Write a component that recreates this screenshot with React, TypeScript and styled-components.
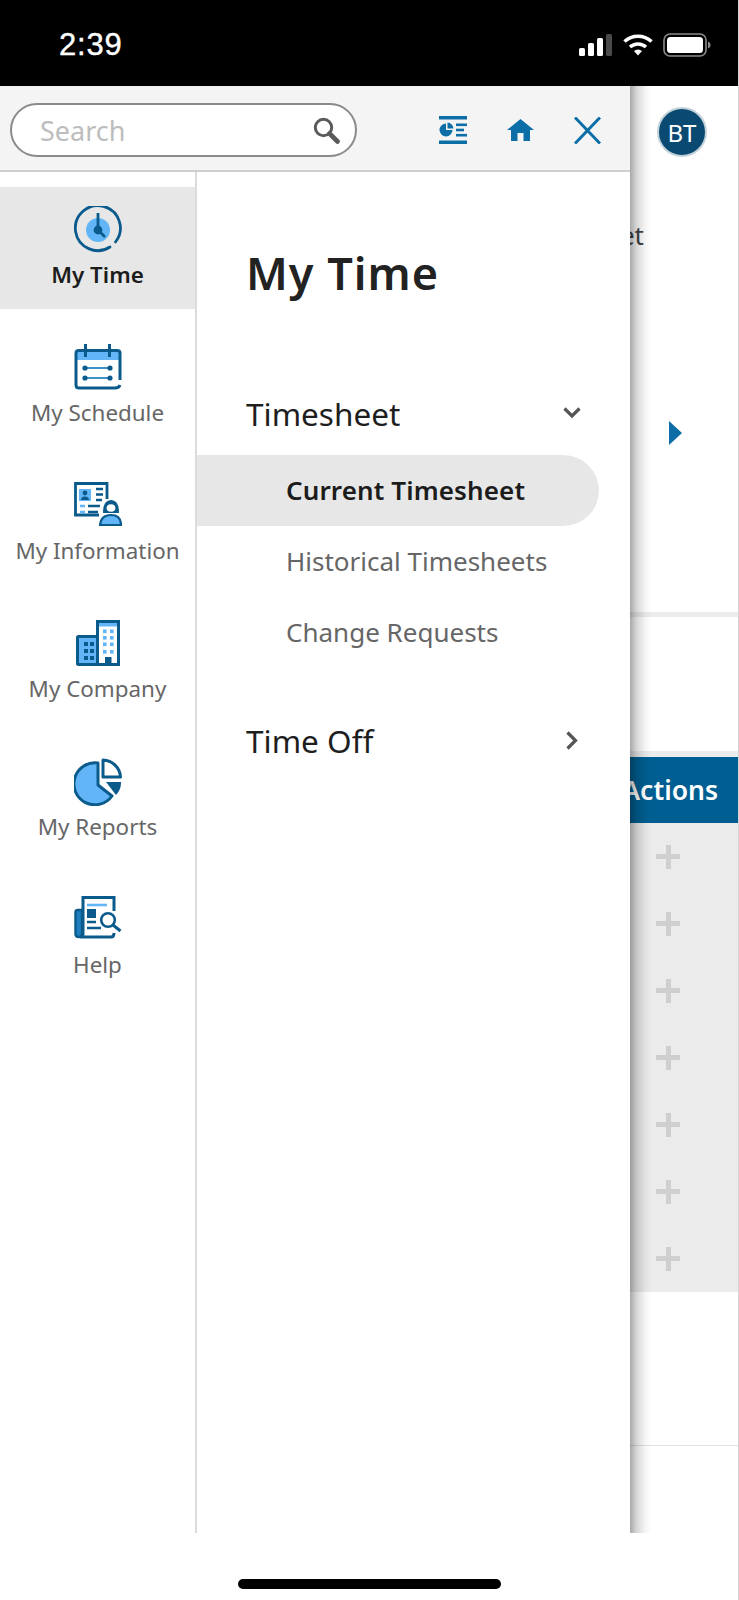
import React from "react";
import styled, { createGlobalStyle } from "styled-components";

const DARK = "#0a5a8c";
const LIGHT = "#62b6f7";
const BRAND = "#0b6ea6";
const FONT = `"Noto Sans", "Open Sans", sans-serif`;

const Global = createGlobalStyle`
  html, body { margin: 0; padding: 0; background: #fff; }
  * { box-sizing: border-box; }
`;

const Screen = styled.div`
  position: relative;
  width: 739px;
  height: 1600px;
  overflow: hidden;
  background: #fff;
  border-right: 1px solid #d4d4d4;
  font-family: ${FONT};
  display: flex;
  flex-direction: column;
`;

const StatusBar = styled.div`
  height: 86px;
  flex: none;
  background: #000;
  color: #fff;
  display: flex;
  align-items: center;
  justify-content: space-between;
  padding: 3px 27px 0 59px;
`;

const Clock = styled.span`
  font-family: "Liberation Sans", Arial, sans-serif;
  font-size: 31px;
  line-height: 30px;
  font-weight: 500;
  -webkit-text-stroke: 0.4px #fff;
  letter-spacing: 0.8px;
`;

const StatusIcons = styled.div`
  display: flex;
  align-items: center;
  gap: 10px;
`;

const Page = styled.div`
  flex: none;
  height: 1447px;
  display: flex;
  flex-direction: column;
  background: #fff;
`;

const PageTop = styled.div`
  height: 526px;
  flex: none;
  display: flex;
  flex-direction: column;
  align-items: flex-end;
  padding: 21px 31px 0 0;
`;

const Avatar = styled.div`
  width: 50px;
  height: 50px;
  border-radius: 50%;
  background: #0a4a72;
  border: 2px solid #c4d2da;
  color: #fff;
  display: flex;
  align-items: center;
  justify-content: center;
  font-size: 24px;
`;

const PageText = styled.div`
  font-size: 26px;
  line-height: 36px;
  color: #444;
  margin: 60px 63px 0 0;
  white-space: nowrap;
`;

const NextArrow = styled.div`
  width: 0;
  height: 0;
  margin: 168px 25px 0 0;
  border-top: 12.5px solid transparent;
  border-bottom: 12.5px solid transparent;
  border-left: 13px solid ${BRAND};
`;

const Band = styled.div<{ $h: number }>`
  height: ${(p) => p.$h}px;
  flex: none;
  background: #ececec;
`;

const Gap = styled.div<{ $h: number }>`
  height: ${(p) => p.$h}px;
  flex: none;
`;

const TableHead = styled.div`
  height: 66px;
  flex: none;
  background: #005f92;
  color: #fff;
  font-size: 26.5px;
  font-weight: 600;
  display: flex;
  align-items: center;
  justify-content: flex-end;
  padding-right: 20px;
`;

const TableBody = styled.div`
  display: flex;
  flex-direction: column;
  background: #ebebeb;
  flex: none;
`;

const TableRow = styled.div`
  height: 67px;
  display: flex;
  align-items: center;
  justify-content: flex-end;
  padding-right: 58px;
`;

const Plus = styled.div`
  position: relative;
  width: 24px;
  height: 24px;
  &::before, &::after {
    content: "";
    position: absolute;
    background: #cfcfcf;
  }
  &::before { left: 0; right: 0; top: 9.5px; height: 5px; }
  &::after { top: 0; bottom: 0; left: 9.5px; width: 5px; }
`;

const FootLine = styled.div`
  height: 1px;
  flex: none;
  background: #e2e2e2;
  margin-top: 153px;
`;

const HomeArea = styled.div`
  flex: 1;
  display: flex;
  justify-content: center;
  padding-top: 46px;
`;

const HomeIndicator = styled.div`
  width: 263px;
  height: 10px;
  border-radius: 5px;
  background: #000;
`;

const Drawer = styled.aside`
  position: absolute;
  left: 0;
  top: 86px;
  width: 630px;
  height: 1447px;
  background: #fff;
  display: flex;
  flex-direction: column;
  &::after {
    content: "";
    position: absolute;
    left: 100%;
    top: 0;
    bottom: 0;
    width: 22px;
    background: linear-gradient(
      to right,
      rgba(0, 0, 0, 0.34),
      rgba(0, 0, 0, 0.16) 30%,
      rgba(0, 0, 0, 0.04) 70%,
      rgba(0, 0, 0, 0)
    );
  }
`;

const DrawerHeader = styled.header`
  height: 86px;
  flex: none;
  background: #f4f4f4;
  border-bottom: 2px solid #cfcfcf;
  display: flex;
  align-items: center;
  padding: 4px 29px 0 10px;
`;

const SearchBox = styled.div`
  width: 347px;
  height: 54px;
  border-radius: 27px;
  border: 2px solid #8a8a8a;
  background: #fff;
  display: flex;
  align-items: center;
  justify-content: space-between;
  padding: 0 15px 0 28px;
`;

const SearchText = styled.span`
  font-size: 27px;
  color: #bdbdbd;
`;

const HeaderIcons = styled.div`
  margin-left: auto;
  display: flex;
  align-items: center;
  gap: 40px;
`;

const DrawerBody = styled.div`
  flex: 1;
  display: flex;
  min-height: 0;
`;

const Rail = styled.nav`
  width: 197px;
  flex: none;
  border-right: 2px solid #dcdcdc;
  padding-top: 15px;
  display: flex;
  flex-direction: column;
  gap: 16px;
`;

const RailItem = styled.div<{ $active?: boolean }>`
  height: 122px;
  flex: none;
  padding-top: 19px;
  display: flex;
  flex-direction: column;
  align-items: center;
  background: ${(p) => (p.$active ? "#e7e7e7" : "transparent")};
`;

const RailIcon = styled.div`
  height: 48px;
  display: flex;
  align-items: flex-start;
  justify-content: center;
  svg { display: block; }
`;

const RailLabel = styled.div<{ $active?: boolean }>`
  margin-top: 6px;
  font-size: 22.4px;
  line-height: 30px;
  white-space: nowrap;
  color: ${(p) => (p.$active ? "#1c1c1c" : "#666")};
  font-weight: ${(p) => (p.$active ? 600 : 400)};
`;

const SubNav = styled.div`
  flex: 1;
  display: flex;
  flex-direction: column;
  padding-top: 66px;
`;

const Title = styled.h1`
  margin: 0 0 0 49px;
  font-family: "Noto Sans", sans-serif;
  font-size: 45px;
  line-height: 70px;
  font-weight: 600;
  color: #222;
  letter-spacing: 1px;
`;

const GroupRow = styled.div<{ $top: number }>`
  margin-top: ${(p) => p.$top}px;
  height: 50px;
  display: flex;
  align-items: center;
  justify-content: space-between;
  padding: 0 47px 0 49px;
  font-size: 31.5px;
  color: #1e1e1e;
`;

const ChevronSlot = styled.span`
  width: 22px;
  display: flex;
  justify-content: center;
`;

const SubList = styled.div`
  margin-top: 17px;
  display: flex;
  flex-direction: column;
`;

const SubItem = styled.div<{ $active?: boolean }>`
  width: 402px;
  height: 71px;
  display: flex;
  align-items: center;
  padding: 0 0 2px 89px;
  font-size: 26px;
  white-space: nowrap;
  letter-spacing: ${(p) => (p.$active ? "0.12px" : "0")};
  color: ${(p) => (p.$active ? "#1c1c1c" : "#666")};
  font-weight: ${(p) => (p.$active ? 600 : 400)};
  background: ${(p) => (p.$active ? "#e7e7e7" : "transparent")};
  border-radius: 0 36px 36px 0;
`;

const SignalIcon = () => (
  <svg width="34" height="22" viewBox="0 0 34 22">
    <rect x="0" y="14" width="6" height="8" rx="1.5" fill="#fff" />
    <rect x="9" y="9" width="6" height="13" rx="1.5" fill="#fff" />
    <rect x="18" y="4" width="6" height="18" rx="1.5" fill="#fff" />
    <rect x="27" y="0" width="6" height="22" rx="1.5" fill="#4a4a4a" />
  </svg>
);

const WifiIcon = () => (
  <svg width="30" height="22" viewBox="0 0 30 22">
    <path d="M1.5 7.5 A20 20 0 0 1 28.5 7.5" fill="none" stroke="#fff" strokeWidth="3.6" />
    <path d="M7 13 A12 12 0 0 1 23 13" fill="none" stroke="#fff" strokeWidth="3.6" />
    <path d="M11 17 L15 21.5 L19 17 A6 6 0 0 0 11 17 Z" fill="#fff" />
  </svg>
);

const BatteryIcon = () => (
  <svg width="48" height="24" viewBox="0 0 48 24">
    <rect x="1" y="1" width="42" height="22" rx="6" fill="none" stroke="#8a8a8a" strokeWidth="1.6" />
    <rect x="4" y="4" width="36" height="16" rx="3.5" fill="#fff" />
    <path d="M45 8.5 C47 9.5 47.5 10.5 47.5 12 C47.5 13.5 47 14.5 45 15.5 Z" fill="#8a8a8a" />
  </svg>
);

const MagnifierIcon = () => (
  <svg width="27" height="27" viewBox="0 0 27 27">
    <circle cx="10.5" cy="10.5" r="8.2" fill="none" stroke="#5a5a5a" strokeWidth="3" />
    <path d="M16.5 16.5 L24.5 24.5" stroke="#5a5a5a" strokeWidth="4.6" strokeLinecap="round" />
  </svg>
);

const ReportBarIcon = () => (
  <svg width="28" height="28" viewBox="0 0 28 28" fill={BRAND}>
    <rect x="0" y="0" width="28" height="3.5" />
    <rect x="0" y="24.5" width="28" height="3.5" />
    <path d="M7 7.5 A6.5 6.5 0 1 0 13.5 14 L7 14 Z" />
    <path d="M8.5 6.5 A6.5 6.5 0 0 1 14.5 12.5 L8.5 12.5 Z" />
    <rect x="17" y="7.5" width="11" height="2.6" />
    <rect x="17" y="12.7" width="8" height="2.6" />
    <rect x="17" y="17.9" width="11" height="2.6" />
  </svg>
);

const HomeIcon = () => (
  <svg width="27" height="22" viewBox="0 0 27 22" fill={BRAND}>
    <path d="M13.5 0 L27 11 L23 11 L23 22 L16.5 22 L16.5 14 L10.5 14 L10.5 22 L4 22 L4 11 L0 11 Z" />
  </svg>
);

const CloseIcon = () => (
  <svg width="27" height="27" viewBox="0 0 27 27" fill="none" stroke={BRAND} strokeWidth="3">
    <path d="M1 0.5 L26 26.5 M26 0.5 L1 26.5" />
  </svg>
);

const ChevronDown = () => (
  <svg width="18" height="12" viewBox="0 0 18 12" fill="none" stroke="#555" strokeWidth="3.2">
    <path d="M1.5 1.5 L9 9 L16.5 1.5" />
  </svg>
);

const ChevronRight = () => (
  <svg width="12" height="19" viewBox="0 0 12 19" fill="none" stroke="#555" strokeWidth="3.2">
    <path d="M1.5 1.5 L9.5 9.5 L1.5 17.5" />
  </svg>
);

const ClockRailIcon = () => (
  <svg width="48" height="48" viewBox="0 0 48 48" fill="none">
    <path d="M36 41 A 22.5 22.5 0 1 1 41.5 36" stroke={DARK} strokeWidth="2.8" strokeLinecap="round" />
    <circle cx="24" cy="24" r="12" fill={LIGHT} />
    <path d="M24 7 L24 24 L31 31" stroke={DARK} strokeWidth="2.8" />
    <circle cx="24" cy="24" r="4.4" fill={DARK} />
  </svg>
);

const ScheduleIcon = () => (
  <svg width="48" height="46" viewBox="0 0 48 46" fill="none">
    <path d="M2 16 L2 8 Q2 6 4 6 L44 6 Q46 6 46 8 L46 16 Z" fill={LIGHT} />
    <path d="M46 36 L46 9 Q46 6.5 43 6.5 L5 6.5 Q2 6.5 2 9 L2 41 Q2 44 5 44 L41 44 Q45 44 46 41" stroke={DARK} strokeWidth="3" />
    <path d="M11.5 0 L11.5 13 M35.5 0 L35.5 13" stroke={DARK} strokeWidth="3" />
    <path d="M11 24 L36 24 M11 34 L36 34" stroke="#3f8fc8" strokeWidth="1.8" />
    <circle cx="11" cy="24" r="2.6" fill={DARK} />
    <circle cx="36" cy="24" r="2.6" fill={DARK} />
    <circle cx="11" cy="34" r="2.6" fill={DARK} />
    <circle cx="36" cy="34" r="2.6" fill={DARK} />
  </svg>
);

const InformationIcon = () => (
  <svg width="48" height="44" viewBox="0 0 48 44" fill="none">
    <path d="M25 33 L1.5 33 L1.5 1.5 L33 1.5 L33 17" stroke={DARK} strokeWidth="2.8" />
    <rect x="5" y="7" width="12" height="12" fill={LIGHT} />
    <circle cx="11" cy="11" r="2.4" fill={DARK} />
    <path d="M7 18 Q7 14.5 11 14.5 Q15 14.5 15 18 Z" fill={DARK} />
    <path d="M22 7 L29 7 M22 12.5 L29 12.5 M22 18 L28 18" stroke={DARK} strokeWidth="2.4" />
    <path d="M6 24 L11 24 M6 30 L11 30" stroke={LIGHT} strokeWidth="2.6" />
    <path d="M14 24 L26 24 M14 30 L24 30" stroke={DARK} strokeWidth="2.6" />
    <path d="M29 31 Q29 18 37 18 Q45 18 45 31 Z" fill={DARK} />
    <ellipse cx="37" cy="26" rx="4.4" ry="3.8" fill="#fff" />
    <path d="M26 43 Q27 33 37 33 Q47 33 47 43 Z" fill={LIGHT} stroke={DARK} strokeWidth="2.2" />
  </svg>
);

const CompanyIcon = () => (
  <svg width="44" height="46" viewBox="0 0 44 46" fill="none">
    <rect x="1.5" y="16.5" width="22" height="28" rx="1" fill={LIGHT} stroke={DARK} strokeWidth="3" />
    <rect x="21.5" y="1.5" width="21" height="43" fill="#fff" stroke={DARK} strokeWidth="3" />
    <rect x="23" y="3" width="18" height="3.5" fill={LIGHT} />
    <g fill={DARK}>
      <rect x="8" y="22" width="4" height="4" />
      <rect x="14" y="22" width="4" height="4" />
      <rect x="8" y="29" width="4" height="4" />
      <rect x="14" y="29" width="4" height="4" />
      <rect x="8" y="36" width="4" height="4" />
      <rect x="14" y="36" width="4" height="4" />
    </g>
    <g fill={LIGHT}>
      <rect x="27" y="9.5" width="3.6" height="3.6" />
      <rect x="34" y="9.5" width="3.6" height="3.6" />
      <rect x="27" y="16" width="3.6" height="3.6" />
      <rect x="34" y="16" width="3.6" height="3.6" />
      <rect x="27" y="22.5" width="3.6" height="3.6" />
      <rect x="34" y="22.5" width="3.6" height="3.6" />
      <rect x="27" y="30" width="3.6" height="3.6" />
      <rect x="34" y="30" width="3.6" height="3.6" />
    </g>
    <rect x="29" y="37" width="6.5" height="9" fill={DARK} />
  </svg>
);

const ReportsIcon = () => (
  <svg width="48" height="48" viewBox="0 0 48 48" fill="none">
    <path d="M24 5 A21 21 0 1 0 38 38 L24 27 Z" fill={LIGHT} stroke={DARK} strokeWidth="3" strokeLinejoin="round" />
    <path d="M29 2 A 18 18 0 0 1 46.5 19 L29 19 Z" fill="#fff" stroke={DARK} strokeWidth="3" strokeLinejoin="round" />
    <path d="M32 24 L47 24 A 18 18 0 0 1 42 37 Z" fill={DARK} />
  </svg>
);

const HelpIcon = () => (
  <svg width="48" height="44" viewBox="0 0 48 44" fill="none">
    <path d="M8 14 L3.5 14 Q1.5 14 1.5 16 L1.5 38 Q1.5 41 5 41 Q8 41 8 38 Z" fill="#1f7fbe" stroke={DARK} strokeWidth="2.4" />
    <path d="M40 15 L40 1.5 L9 1.5 L9 38 Q9 41 6 41 L37 41 Q40 41 40 37" stroke={DARK} strokeWidth="3" />
    <path d="M13 9 L33 9" stroke={LIGHT} strokeWidth="2.6" />
    <rect x="13" y="13" width="9" height="9" fill={DARK} />
    <path d="M13 26 L22 26 M13 32 L27 32" stroke={DARK} strokeWidth="2.6" />
    <circle cx="34" cy="24" r="6.8" fill="#fff" stroke={DARK} strokeWidth="2.6" />
    <path d="M39 29 L46.5 35" stroke={DARK} strokeWidth="3" />
  </svg>
);

const railItems: { label: string; icon: React.ReactNode; active?: boolean }[] = [
  { label: "My Time", icon: <ClockRailIcon />, active: true },
  { label: "My Schedule", icon: <ScheduleIcon /> },
  { label: "My Information", icon: <InformationIcon /> },
  { label: "My Company", icon: <CompanyIcon /> },
  { label: "My Reports", icon: <ReportsIcon /> },
  { label: "Help", icon: <HelpIcon /> },
];

export default function App() {
  return (
    <Screen>
      <Global />
      <StatusBar>
        <Clock>2:39</Clock>
        <StatusIcons>
          <SignalIcon />
          <WifiIcon />
          <BatteryIcon />
        </StatusIcons>
      </StatusBar>

      <Page>
        <PageTop>
          <Avatar>BT</Avatar>
          <PageText>Timesheet</PageText>
          <NextArrow />
        </PageTop>
        <Band $h={5} />
        <Gap $h={134} />
        <Band $h={6} />
        <TableHead>Actions</TableHead>
        <TableBody>
          {Array.from({ length: 7 }).map((_, i) => (
            <TableRow key={i}>
              <Plus />
            </TableRow>
          ))}
        </TableBody>
        <FootLine />
      </Page>

      <HomeArea>
        <HomeIndicator />
      </HomeArea>

      <Drawer>
        <DrawerHeader>
          <SearchBox>
            <SearchText>Search</SearchText>
            <MagnifierIcon />
          </SearchBox>
          <HeaderIcons>
            <ReportBarIcon />
            <HomeIcon />
            <CloseIcon />
          </HeaderIcons>
        </DrawerHeader>
        <DrawerBody>
          <Rail>
            {railItems.map((item) => (
              <RailItem key={item.label} $active={item.active}>
                <RailIcon>{item.icon}</RailIcon>
                <RailLabel $active={item.active}>{item.label}</RailLabel>
              </RailItem>
            ))}
          </Rail>
          <SubNav>
            <Title>My Time</Title>
            <GroupRow $top={80}>
              <span>Timesheet</span>
              <ChevronSlot>
                <ChevronDown />
              </ChevronSlot>
            </GroupRow>
            <SubList>
              <SubItem $active>Current Timesheet</SubItem>
              <SubItem>Historical Timesheets</SubItem>
              <SubItem>Change Requests</SubItem>
            </SubList>
            <GroupRow $top={47}>
              <span>Time Off</span>
              <ChevronSlot>
                <ChevronRight />
              </ChevronSlot>
            </GroupRow>
          </SubNav>
        </DrawerBody>
      </Drawer>
    </Screen>
  );
}
